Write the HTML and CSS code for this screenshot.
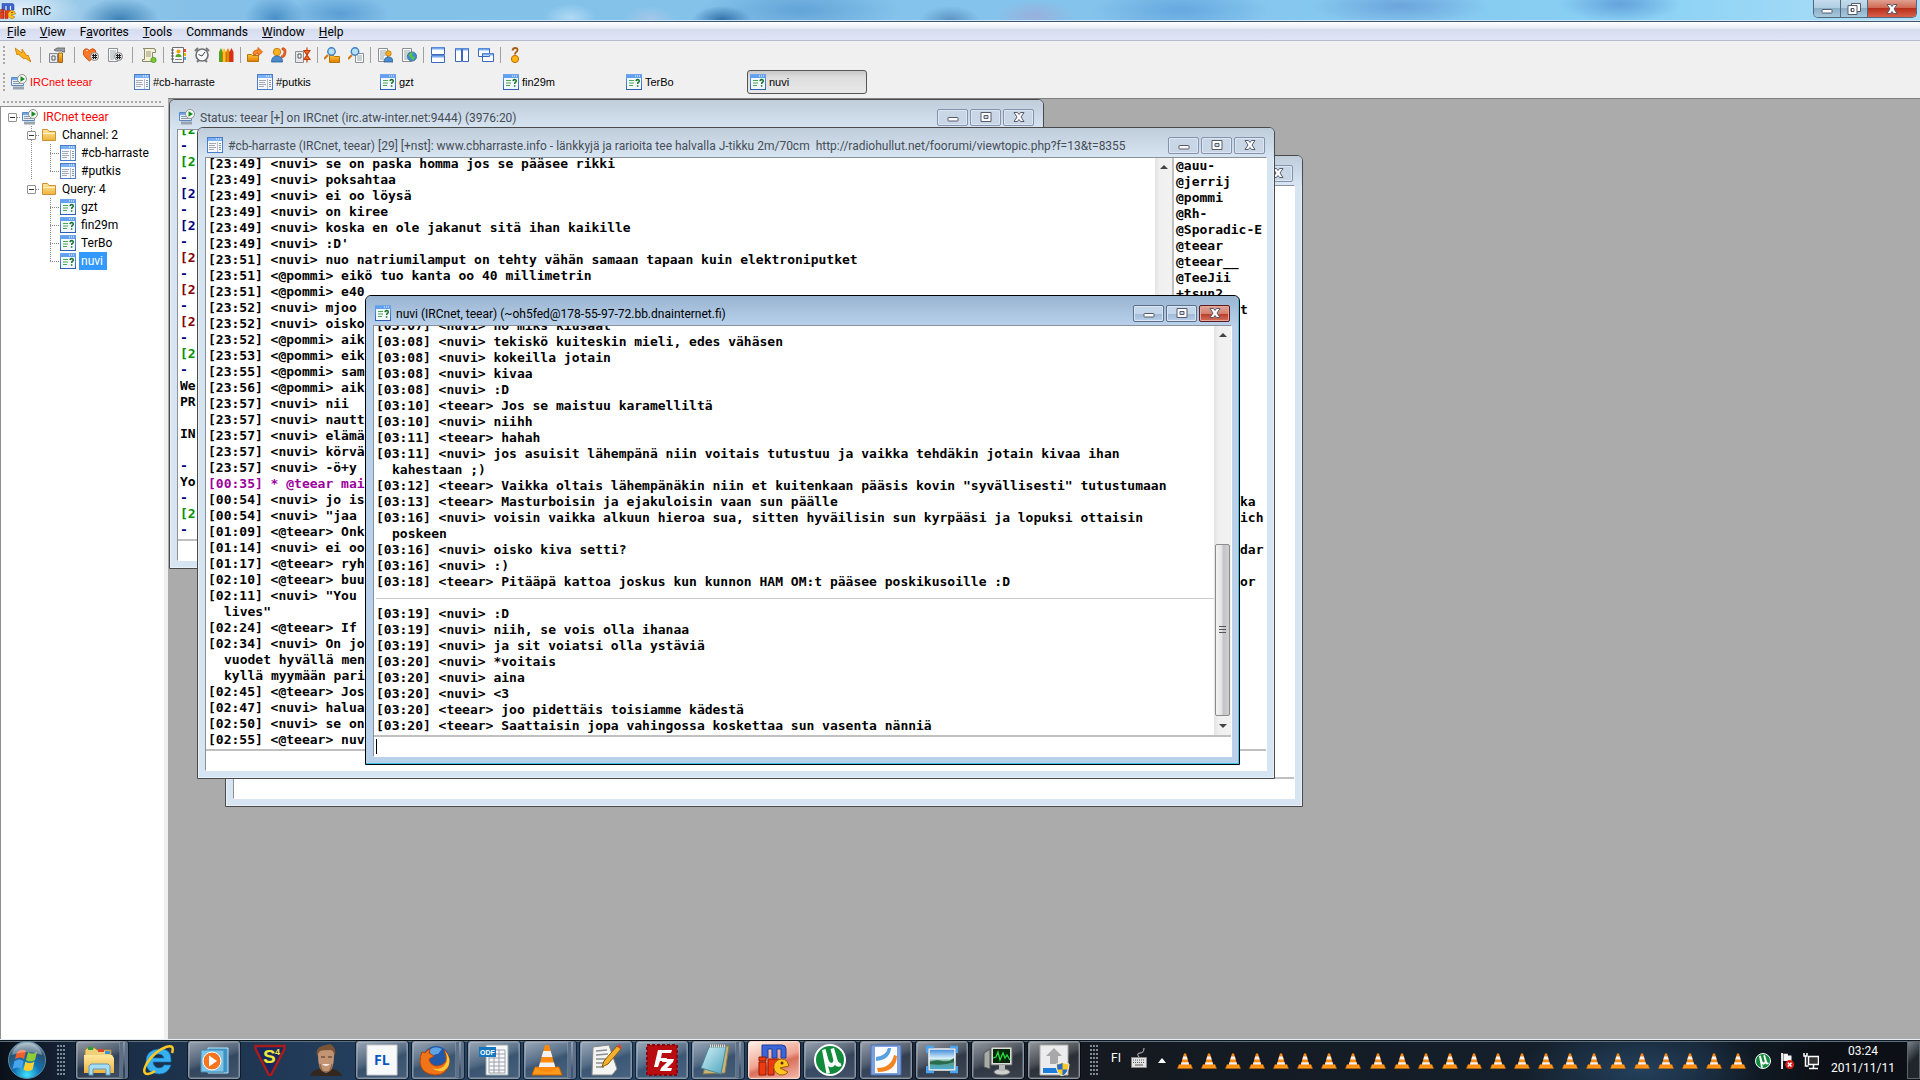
FILE: index.html
```html
<!DOCTYPE html>
<html lang="fi">
<head>
<meta charset="utf-8">
<title>mIRC</title>
<link rel="stylesheet" href="styles.css">
</head>
<body>
<svg class="sprites" aria-hidden="true">
  <defs>
    <linearGradient id="gBlue" x1="0" y1="0" x2="0" y2="1"><stop offset="0" stop-color="#6fa4ec"/><stop offset="1" stop-color="#2c5fb4"/></linearGradient>
    <linearGradient id="gFolder" x1="0" y1="0" x2="0" y2="1"><stop offset="0" stop-color="#ffe9a0"/><stop offset="1" stop-color="#eeb23c"/></linearGradient>
    <linearGradient id="gOrange" x1="0" y1="0" x2="0" y2="1"><stop offset="0" stop-color="#ffc83c"/><stop offset="1" stop-color="#e07800"/></linearGradient>
    <radialGradient id="gOrb" cx=".5" cy=".9" r=".9"><stop offset="0" stop-color="#3fe4ff"/><stop offset=".4" stop-color="#1272b4"/><stop offset=".75" stop-color="#28506e"/><stop offset="1" stop-color="#a8bcc8"/></radialGradient>
    <linearGradient id="gSky" x1="0" y1="0" x2="0" y2="1"><stop offset="0" stop-color="#3a86d8"/><stop offset=".45" stop-color="#d8f0fa"/><stop offset=".6" stop-color="#5a9a80"/><stop offset="1" stop-color="#4cb0d8"/></linearGradient>
    <linearGradient id="gNote" x1="0" y1="0" x2="1" y2="1"><stop offset="0" stop-color="#d6f2f8"/><stop offset="1" stop-color="#4aa2bc"/></linearGradient>
  </defs>
  <symbol id="chan" viewBox="0 0 16 16"><rect x=".5" y=".5" width="15" height="15" fill="#f6f9fd" stroke="#4a7cc8"/><path d="M1 1h14v3H1z" fill="#7ab0f4"/><path d="M9 2h1M11 2h1M13 2h1" stroke="#fff"/><path d="M2 6.500h7M2 8.500h6M2 10.500h7M2 12.500h5" stroke="#a4a8b0"/><path d="M10.500 5v10" stroke="#b8bcc4"/><path d="M12 6.500h2M12 8.500h2M12 10.500h2M12 12.500h2" stroke="#8c929c"/></symbol>
  <symbol id="query" viewBox="0 0 16 16"><rect x=".5" y=".5" width="15" height="15" fill="#f2f8fc" stroke="url(#gBlue)"/><path d="M1 1h14v3H1z" fill="#62a0f0"/><path d="M9 2h1M11 2h1M13 2h1" stroke="#fff"/><path d="M3 6.500h5M3 9h5M3 11.500h4" stroke="#4aa850"/><path d="M10 7.200q.2-1.700 1.800-1.700 1.500.2 1.500 1.500 0 .9-1 1.400-.6.4-.6 1.600M11.600 11.200v1.600" fill="none" stroke="#167028" stroke-width="1.500"/></symbol>
  <symbol id="server" viewBox="0 0 16 16"><path d="M.500 3.500h12v8h-12z" fill="#e8eff8" stroke="#5c86c0"/><path d="M1 4h11v2H1z" fill="#74a6ea"/><path d="M2 7.500h7M2 9.500h8" stroke="#8c98a8"/><path d="M2 14h11" stroke="#9aa4b0" stroke-width="3"/><circle cx="11" cy="5" r="4.500" fill="#f4f8f4" stroke="#8a948c"/><path d="M9.500 2.200v5.600l4.500-2.800z" fill="#178a20"/></symbol>
  <symbol id="folder" viewBox="0 0 16 16"><path d="M1.500 13.500v-11h5l1.500 2h6.500v9z" fill="url(#gFolder)" stroke="#d09030"/><path d="M2 6.500h12" stroke="#fff4c8"/></symbol>
  <symbol id="mirc" viewBox="0 0 32 32"><path d="M4 14V1h20q4 0 4 4v9h-5V5h-4v9h-5V5h-4v9z" fill="#3c66d8" stroke="#1a3a98"/><path d="M1 13h7v4H1zM1 18h7v13H1zM10 15h11v6h-5v10h-6z" fill="#ee3a10" stroke="#8c1a04"/><path d="M29 17a8 8 0 1 0 1 11l-8-4 9-2z" fill="#ffc420" stroke="#9a5c00"/><circle cx="24" cy="19" r="1.500" fill="#5c2c00"/></symbol>
  <symbol id="bolt" viewBox="0 0 16 16"><path d="M0 1l7 5 0-4 5 7 1-1 3 7-6-4-1 1-6-5-1 1z" fill="#ffb31e" stroke="#c67800" stroke-width=".8"/></symbol>
  <symbol id="opts" viewBox="0 0 16 16"><path d="M.5 6.500h8v9h-8z" fill="#e6e8ec" stroke="#83878f"/><path d="M3 9h3v4H3z" fill="#fff" stroke="#555"/><path d="M5 3q3-3 6-2h5v4h-2l-1-1h-6z" fill="#9a9ea4" stroke="#555b62" stroke-width=".8"/><path d="M9.500 6h4v9.500h-4z" fill="url(#gOrange)" stroke="#8a5200" stroke-width=".8"/></symbol>
  <symbol id="heart" viewBox="0 0 16 16"><path d="M6.500 14Q-1.500 8 .6 3.500 3 .2 6.500 3.500 10 .2 12.500 3.500 14 8 6.500 14z" fill="#ff7626" stroke="#cc4a08"/><path d="M3 4q1-1 2-.500" stroke="#ffd0a0" fill="none"/><circle cx="11.500" cy="9.500" r="4" fill="#dcdfe2" stroke="#888"/><path d="M10.500 7v5M12.500 7v5M9 8.500h5M9 10.500h5" stroke="#222"/></symbol>
  <symbol id="listc" viewBox="0 0 16 16"><path d="M1.500 1.500h9v13h-9z" fill="#fafafa" stroke="#8c9096"/><path d="M3 4h6M3 6h6M3 8h4M3 10h4M3 12h4" stroke="#9aa"/><circle cx="11.500" cy="9.500" r="4" fill="#d8dbde" stroke="#888"/><path d="M10.500 7v5M12.500 7v5M9 8.500h5M9 10.500h5" stroke="#222"/></symbol>
  <symbol id="scroll" viewBox="0 0 16 16"><path d="M3.500 2.500v10H1.500v2h10v-9h3v-3h-1v-1H2z" fill="#f4f0da" stroke="#8e8a68"/><path d="M5 5h5M5 7h5M5 9h5" stroke="#a09a78"/><circle cx="12.500" cy="13" r="2.700" fill="#78c830" stroke="#468a14" stroke-width=".6"/></symbol>
  <symbol id="abook" viewBox="0 0 16 16"><path d="M2.500.5h11v15h-11z" fill="#f6f6f6" stroke="#6a6e74"/><path d="M1 3h3M1 6h3M1 9h3M1 12h3" stroke="#555"/><path d="M14 2h2v3h-2z" fill="#ee4828"/><path d="M14 6h2v3h-2z" fill="#f2b400"/><path d="M14 10h2v3h-2z" fill="#5aa8e8"/><circle cx="8.500" cy="4.500" r="2" fill="#f0a000"/><path d="M5.500 10q0-3 3-3t3 3z" fill="#55a828"/><path d="M5 12.500h7" stroke="#888"/></symbol>
  <symbol id="clock" viewBox="0 0 16 16"><path d="M1 4l3-3M15 4l-3-3M3 15l2-2M13 15l-2-2" stroke="#74787c" stroke-width="2"/><circle cx="8" cy="8" r="6" fill="#fafafa" stroke="#6c7074" stroke-width="1.600"/><path d="M8 9l3-4M8 9L4.500 7.500" stroke="#444"/></symbol>
  <symbol id="pens" viewBox="0 0 16 16"><path d="M1 15V5l2-4 2 4v10z" fill="#55a020"/><path d="M4 15V5l2-4 2 4v10z" fill="#ffc020"/><path d="M8 15V5l2-4 2 4v10z" fill="#f08010"/><path d="M11.500 15V5l2-4 2 4v10z" fill="#d83010"/><path d="M4.500 5v10M8 5v10M11.500 5v10" stroke="#8a5000" stroke-width=".6"/></symbol>
  <symbol id="send" viewBox="0 0 16 16"><path d="M.5 7.500h4l1 1h6v6H.5z" fill="url(#gOrange)" stroke="#b87400"/><path d="M6 7q0-4 5-4V.5L15.500 5 11 9V6q-2 0-2.500 2z" fill="#ff8a20" stroke="#c84c08" stroke-width=".8"/></symbol>
  <symbol id="chat" viewBox="0 0 16 16"><circle cx="6" cy="5" r="3.700" fill="#ffb020" stroke="#b87000" stroke-width=".8"/><path d="M.5 15q0-6 5.500-6t5.500 6z" fill="#4a8ccc" stroke="#2a5a94" stroke-width=".8"/><path d="M11 1q4-1 4 4t-4 6l-1-2q3-1 3-4t-2-2z" fill="#f06420" stroke="#b83a08" stroke-width=".6"/></symbol>
  <symbol id="dcc" viewBox="0 0 16 16"><path d="M.5 4.500h8v11h-8z" fill="#e6e8ec" stroke="#8a8e95"/><path d="M3 7h3v4H3z" fill="#fff" stroke="#555"/><path d="M12 .5v3h3L12 8 9 3.500h3zM12 15.500v-3h3L12 8l-3 4.500h3z" fill="#f47020" stroke="#c83808" stroke-width="1.200"/></symbol>
  <symbol id="searchf" viewBox="0 0 16 16"><path d="M5.500 8.500h4l1 1h5v6h-10z" fill="url(#gOrange)" stroke="#b87400"/><path d="M4 8l-4 4" stroke="#d07818" stroke-width="2.200"/><circle cx="7.500" cy="4.500" r="3.700" fill="#b8e0f8" stroke="#3c80c0" stroke-width="1.400"/></symbol>
  <symbol id="searchl" viewBox="0 0 16 16"><path d="M7.500 6.500h8v9h-8z" fill="#fafafa" stroke="#8c9096"/><path d="M9 9h5M9 11h5M9 13h5" stroke="#9aa"/><path d="M4 8l-4 4" stroke="#d07818" stroke-width="2.200"/><circle cx="7" cy="4.500" r="3.700" fill="#b8e0f8" stroke="#3c80c0" stroke-width="1.400"/></symbol>
  <symbol id="notify" viewBox="0 0 16 16"><path d="M1.500 1.500h9v13h-9z" fill="#fafafa" stroke="#8c9096"/><path d="M3 4h6M3 6h6M3 8h6M3 10h4M3 12h4" stroke="#9aa"/><circle cx="11.500" cy="6.500" r="2.700" fill="#ffb020" stroke="#b87000" stroke-width=".8"/><path d="M7 15q0-5 4.500-5t4.500 5z" fill="#4a8ccc" stroke="#2a5a94" stroke-width=".8"/></symbol>
  <symbol id="urls" viewBox="0 0 16 16"><path d="M1.500 1.500h9v13h-9z" fill="#fafafa" stroke="#8c9096"/><path d="M3 4h6M3 6h6M3 8h4M3 10h3M3 12h4" stroke="#9aa"/><circle cx="11" cy="9.500" r="4.600" fill="#3c8cd4" stroke="#245a94" stroke-width=".7"/><path d="M7.500 8q3-4 4.500-2l-1 3 3 1-2 4-2-3z" fill="#5cc040"/></symbol>
  <symbol id="tileh" viewBox="0 0 16 16"><path d="M1.500.5h13v7h-13zM1.500 8.500h13v7h-13z" fill="#fff" stroke="#3a68bc"/><path d="M2 1.500h12M2 9.500h12" stroke="#78aaf0" stroke-width="2"/></symbol>
  <symbol id="tilev" viewBox="0 0 16 16"><path d="M1.500 1.500h6v13h-6zM8.500 1.500h6v13h-6z" fill="#fff" stroke="#3a68bc"/><path d="M2 2.500h5M9 2.500h5" stroke="#78aaf0" stroke-width="2"/></symbol>
  <symbol id="cascade" viewBox="0 0 16 16"><path d="M.5 1.500h11v8H.5zM4.500 6.500h11v8h-11z" fill="#fff" stroke="#3a68bc"/><path d="M1 2.500h10M5 7.500h10" stroke="#78aaf0" stroke-width="2"/></symbol>
  <symbol id="about" viewBox="0 0 16 16"><path d="M5.500 3.500Q6 1 8.300 1t2.200 2Q10.500 4.500 9 5.200 8 5.800 8 7.500" fill="none" stroke="#a85c10" stroke-width="1.800"/><circle cx="8" cy="12" r="3.600" fill="#ffb414" stroke="#b87000"/></symbol>
  <symbol id="wmin" viewBox="0 0 12 10"><rect x="1" y="5.500" width="10" height="3.500" rx=".5" fill="#fff" stroke="#555a6c"/></symbol>
  <symbol id="wmax" viewBox="0 0 12 10"><path fill-rule="evenodd" d="M1 .5h10v9H1zM4 3.500v3h4v-3z" fill="#fff" stroke="#555a6c"/></symbol>
  <symbol id="wrest" viewBox="0 0 14 12"><path d="M4.500.5h9v8h-9z" fill="#fff" stroke="#555a6c"/><path fill-rule="evenodd" d="M1 2.500h9v9H1zM4 5.500v3h3v-3z" fill="#fff" stroke="#555a6c"/></symbol>
  <symbol id="wx" viewBox="0 0 12 10"><path d="M1 .5h3.500L6 2.500 7.500.5H11L8 5l3 4.500H7.500L6 7.500 4.500 9.500H1L4 5z" fill="#fff" stroke="#555a6c"/></symbol>
  <symbol id="vlc" viewBox="0 0 16 16"><path d="M2 11.500h12l1.500 4H.5z" fill="#ff9a1c" stroke="#c86400" stroke-width=".5"/><path d="M7 .5h2L12.500 13q-4.500 2-9 0z" fill="#ff8a10"/><path d="M6.200 3.500h3.600l.9 3H5.300zM4.500 9.300h7l.6 2.200H3.900z" fill="#f2f2f4"/></symbol>
  <symbol id="utor" viewBox="0 0 32 32"><circle cx="16" cy="16" r="15" fill="#128a3c" stroke="#fff" stroke-width="2"/><path d="M8 6l3.500-1 3 11q1.500 4 4 2.500 1.500-1 .5-4L16.500 5l3.500-1 3.500 12q1 3.500 3 3l1 3q-4 2-6.500-1-3 4-7 1l2 7-3.500 1z" fill="#fff"/></symbol>
  <symbol id="orb" viewBox="0 0 40 40"><circle cx="20" cy="20" r="18.500" fill="url(#gOrb)" stroke="#5a8aa4"/><path d="M10 12q5-4 9-1l-2 8q-4-3-9 0z" fill="#f0602c"/><path d="M21 12q4 3 9 0l-2 8q-5 3-9 0z" fill="#90cc38"/><path d="M7.500 21q5-3 9 0l-2 8q-4-3-9 0z" fill="#48a4ec"/><path d="M18.500 21.500q4 3 9 0l-2 8q-5 3-9 0z" fill="#ffce30"/><path d="M5 15Q8 3 20 3t15 12Q20 9 5 15z" fill="#fff" opacity=".35"/></symbol>
  <symbol id="explorer" viewBox="0 0 32 32"><path d="M2 28V6l2-2h8l2 2h14v22z" fill="#f0d078" stroke="#a88430"/><path d="M5 3h5v3H5z" fill="#2ca040"/><path d="M15 5h6v3h-6z" fill="#d84830"/><path d="M22 7h5v3h-5z" fill="#3c90dc"/><path d="M1 11h28l2 3v15H1z" fill="url(#gFolder)"/><path d="M6 31V22l2-2h17l2 2v9h-4v-6H10v6z" fill="#a8dcf4" stroke="#5a9cc4"/></symbol>
  <symbol id="ie" viewBox="0 0 32 32"><path fill-rule="evenodd" d="M29 18H11q1 6 6 6 4 0 5-3h7q-3 9-12 9Q4 29 4 17.500T17 5t12 13zM11 14h11q-1-4-5.500-4T11 14z" fill="#38b0f0" stroke="#1470b8" stroke-width=".7"/><path d="M30 9q3-9-6-6Q13 7 5 19-1 30 6 30q3 0 7-3" fill="none" stroke="#fcc824" stroke-width="2.500"/></symbol>
  <symbol id="wmp" viewBox="0 0 32 32"><path d="M10 4h20v25H10z" fill="#3c96c8" stroke="#bde6fa"/><path d="M3 6h23v22H3z" fill="#7cc4e8" stroke="#4488b0"/><circle cx="14" cy="17" r="9" fill="#f47420" stroke="#fff"/><path d="M11 11.500v11l8-5.500z" fill="#fff"/></symbol>
  <symbol id="face" viewBox="0 0 32 32"><path d="M0 32q2-6 9-7h13q8 1 10 7z" fill="#33271f"/><path d="M8 10q0-8 8-8t8 8q0 12-3 16-5 5-10 0-3-4-3-16z" fill="#c39474"/><path d="M7 13Q5 4 12 2l8-2q7 3 5 13-1-6-4-7-8 0-11 1-2 2-3 6z" fill="#7a5436"/><path d="M11 13h4M18 13h4" stroke="#4a3022" stroke-width="1.200"/><path d="M12 20q4 4 8 0z" fill="#f4ece4"/><path d="M10 20q1 8 6 8t6-8" fill="none" stroke="#94694a" stroke-width="1.500"/></symbol>
  <symbol id="ff" viewBox="0 0 32 32"><circle cx="17" cy="15" r="13" fill="#2258a8"/><path d="M10 6q6-5 13-1l-4 5q-5 0-6 4z" fill="#5ca4e4"/><path d="M3 8l3 1q2-3 5-4l-1 4 5 3-5 3q1 6 7 7 7 0 10-5 1-5-2-11 6 5 5 13-2 12-14 12Q2 30 1 18 1 12 3 8z" fill="#f07418" stroke="#b84408"/><path d="M26 7q4 8 0 14-5 6-13 3 9 7 16-1 4-8-3-16z" fill="#ffc838"/></symbol>
  <symbol id="writer" viewBox="0 0 32 32"><path d="M3 3l16-2 8 24-5 6H2z" fill="#f4f4f2" stroke="#888"/><path d="M6 7l11-1M6 11l12-1M6 15h11M6 19h9M6 23h8" stroke="#8a8e92" stroke-width="1.500"/><path d="M12 23l2-6L27 2l4 3-13 15z" fill="#f4b030" stroke="#8c5800"/><path d="M27 2l4 3 1-2-3-3z" fill="#d44838"/></symbol>
  <symbol id="fz" viewBox="0 0 32 32"><path d="M1 1h30v30H1z" fill="#b80c10" stroke="#8c0408" stroke-width="2" stroke-dasharray="3 2"/><path d="M8 23L12 6h14l-1 3h-9l-1 5h6l-1 3h-6l-2 6zM17 15h11l-1 3-6 6h5l-1 3H14l1-3 6-6h-5z" fill="#fff"/></symbol>
  <symbol id="note" viewBox="0 0 32 32"><path d="M12 2h18l-4 27-22 1z" fill="#c8b478" stroke="#8a7848"/><path d="M10 3h17l-5 27L2 24z" fill="url(#gNote)" stroke="#4a8898"/><path d="M11 2h16" stroke="#ddd" stroke-width="3" stroke-dasharray="1 1"/></symbol>
  <symbol id="pdf" viewBox="0 0 32 32"><path d="M1 1h30v30H1z" fill="#7ea0dc" stroke="#4a70b4"/><path d="M5 3h22v26H5z" fill="#fafcff"/><path d="M6 13q10-1 12-9h3q-1 12-15 13z" fill="#58a0e0"/><path d="M7 24q14 0 17-13l3 1Q26 28 8 28z" fill="#f48420"/></symbol>
  <symbol id="photo" viewBox="0 0 32 32"><path d="M3 5h26v21H3z" fill="url(#gSky)" stroke="#f4f4f4" stroke-width="1.500"/><path d="M4 18q6-3 12-1t12-3v4q-10 4-24 2z" fill="#2c6a50"/><path d="M1 9V3h7M24 3h7v6M31 22v6h-7M8 28H1v-6" fill="none" stroke="#48a4f0" stroke-width="2.500"/></symbol>
  <symbol id="taskm" viewBox="0 0 32 32"><path d="M2 9l6-4v20l-6-2z" fill="#a8aca8" stroke="#555"/><path d="M9 3h21v18H9z" fill="#dcdedc" stroke="#666"/><path d="M11 5h17v14H11z" fill="#06280a"/><path d="M11 14l3-1 2-5 2 8 3-7 2 5 2-3 3 5" fill="none" stroke="#28dc3c" stroke-width="1.300"/><ellipse cx="20" cy="28" rx="8" ry="3" fill="#cfd1cf" stroke="#777"/><path d="M17 21h6v6h-6z" fill="#b8bab8"/></symbol>
  <symbol id="inst" viewBox="0 0 32 32"><path d="M2 1h28v30H2z" fill="#ececee" stroke="#aaa"/><path d="M16 4l8 8h-4v8h-8v-8H8z" fill="#a8a8aa"/><path d="M5 24h16v5H5z" fill="#1c7cdc"/><path d="M18 20q4 0 6-2 3 2 7 2 0 9-7 12-6-3-6-12z" fill="#f8c824" stroke="#eee"/><path d="M19 20.500q3 0 5.500-1.500v6.500h-5zM24.500 25.500h5q-1 4-5 6z" fill="#2468c8"/></symbol>
  <symbol id="kbd" viewBox="0 0 16 22"><path d="M8 10q-3-4 1-4t4-5" fill="none" stroke="#ccc"/><path d="M.5 10.500h15v10H.5z" fill="#e4e4e4" stroke="#888"/><path d="M2 13h12M2 15.500h12" stroke="#555" stroke-dasharray="1 1"/><path d="M4 18h8" stroke="#555"/></symbol>
  <symbol id="flag" viewBox="0 0 16 20"><path d="M2.500 1v18" stroke="#fff" stroke-width="2"/><path d="M4 2h5v2h4v8H9l-1-2H4z" fill="#f4f4f4"/><circle cx="11" cy="14" r="5" fill="#d82018"/><path d="M9 12l4 4M13 12l-4 4" stroke="#fff" stroke-width="1.600"/></symbol>
  <symbol id="net" viewBox="0 0 16 18"><path d="M5.500 4.500h10v8h-10z" fill="#333" stroke="#fff" stroke-width="1.500"/><path d="M10.500 13v3M6 16.500h9M2.500 6v8h3M1 1v3h3V1M2.500 4v3" fill="none" stroke="#fff" stroke-width="1.500"/></symbol>
</svg>

<div class="desktop">
  <header class="titlebar">
    <svg class="i16"><use href="#mirc"/></svg>
    <h1>mIRC</h1>
    <div class="appbtns">
      <button aria-label="Minimize"><svg width="12" height="10"><use href="#wmin"/></svg></button>
      <button aria-label="Restore"><svg width="14" height="12"><use href="#wrest"/></svg></button>
      <button class="close" aria-label="Close"><svg width="12" height="10"><use href="#wx"/></svg></button>
    </div>
  </header>

  <nav class="menubar">
    <button><u>F</u>ile</button><button><u>V</u>iew</button><button>F<u>a</u>vorites</button><button><u>T</u>ools</button><button>Commands</button><button><u>W</u>indow</button><button><u>H</u>elp</button>
  </nav>

  <div class="toolbar">
    <span class="grip"></span>
    <button aria-label="Connect"><svg class="i16"><use href="#bolt"/></svg></button><i class="sep wide"></i>
    <button aria-label="Options"><svg class="i16"><use href="#opts"/></svg></button><i class="sep wide"></i>
    <button aria-label="Favorites"><svg class="i16"><use href="#heart"/></svg></button>
    <button aria-label="Channels list"><svg class="i16"><use href="#listc"/></svg></button><i class="sep wide"></i>
    <button aria-label="Scripts editor"><svg class="i16"><use href="#scroll"/></svg></button><i class="sep"></i>
    <button aria-label="Address book"><svg class="i16"><use href="#abook"/></svg></button>
    <button aria-label="Timer"><svg class="i16"><use href="#clock"/></svg></button>
    <button aria-label="Colors"><svg class="i16"><use href="#pens"/></svg></button><i class="sep"></i>
    <button aria-label="Send file"><svg class="i16"><use href="#send"/></svg></button>
    <button aria-label="Chat"><svg class="i16"><use href="#chat"/></svg></button>
    <button aria-label="DCC options"><svg class="i16"><use href="#dcc"/></svg></button><i class="sep"></i>
    <button aria-label="Received files"><svg class="i16"><use href="#searchf"/></svg></button>
    <button aria-label="Log files"><svg class="i16"><use href="#searchl"/></svg></button><i class="sep"></i>
    <button aria-label="Notify list"><svg class="i16"><use href="#notify"/></svg></button>
    <button aria-label="URL list"><svg class="i16"><use href="#urls"/></svg></button><i class="sep"></i>
    <button aria-label="Tile horizontally"><svg class="i16"><use href="#tileh"/></svg></button>
    <button aria-label="Tile vertically"><svg class="i16"><use href="#tilev"/></svg></button>
    <button aria-label="Cascade"><svg class="i16"><use href="#cascade"/></svg></button><i class="sep"></i>
    <button aria-label="About"><svg class="i16"><use href="#about"/></svg></button>
  </div>

  <div class="switchbar">
    <span class="grip"></span>
    <button class="alert"><svg class="i16"><use href="#server"/></svg>IRCnet teear</button>
    <button><svg class="i16"><use href="#chan"/></svg>#cb-harraste</button>
    <button><svg class="i16"><use href="#chan"/></svg>#putkis</button>
    <button><svg class="i16"><use href="#query"/></svg>gzt</button>
    <button><svg class="i16"><use href="#query"/></svg>fin29m</button>
    <button><svg class="i16"><use href="#query"/></svg>TerBo</button>
    <button class="on"><svg class="i16"><use href="#query"/></svg>nuvi</button>
  </div>

  <div class="work">
    <aside class="side">
      <div class="hgrip"></div>
      <ul class="tree">
        <li><div class="row alert"><b class="box"></b><i class="dash"></i><svg class="i16"><use href="#server"/></svg><span>IRCnet teear</span></div>
          <ul class="lv2">
            <li><div class="row"><b class="box"></b><i class="dash"></i><svg class="i16"><use href="#folder"/></svg><span>Channel: 2</span></div>
              <ul class="lv3">
                <li class="row"><i class="dash"></i><svg class="i16"><use href="#chan"/></svg><span>#cb-harraste</span></li>
                <li class="row"><i class="dash"></i><svg class="i16"><use href="#chan"/></svg><span>#putkis</span></li>
              </ul></li>
            <li><div class="row"><b class="box"></b><i class="dash"></i><svg class="i16"><use href="#folder"/></svg><span>Query: 4</span></div>
              <ul class="lv3">
                <li class="row"><i class="dash"></i><svg class="i16"><use href="#query"/></svg><span>gzt</span></li>
                <li class="row"><i class="dash"></i><svg class="i16"><use href="#query"/></svg><span>fin29m</span></li>
                <li class="row"><i class="dash"></i><svg class="i16"><use href="#query"/></svg><span>TerBo</span></li>
                <li class="row"><i class="dash"></i><svg class="i16"><use href="#query"/></svg><span class="sel">nuvi</span></li>
              </ul></li>
          </ul></li>
      </ul>
    </aside>

    <main class="mdi">
      <section class="win w-status">
        <div class="cap"><svg class="i16"><use href="#server"/></svg><h2>Status: teear [+] on IRCnet (irc.atw-inter.net:9444) (3976:20)</h2>
          <div class="btns"><button aria-label="Minimize"><svg width="12" height="10"><use href="#wmin"/></svg></button><button aria-label="Maximize"><svg width="12" height="10"><use href="#wmax"/></svg></button><button aria-label="Close"><svg width="12" height="10"><use href="#wx"/></svg></button></div></div>
        <div class="body"><div class="pane"><div class="log">
          <p class="green">[2</p><p class="navy">-</p><p class="green">[2</p><p class="navy">-</p><p class="navy">[2</p><p class="navy">-</p><p class="navy">[2</p><p class="navy">-</p><p class="maroon">[2</p><p class="navy">-</p><p class="maroon">[2</p><p class="navy">-</p><p class="maroon">[2</p><p class="navy">-</p><p class="green">[2</p><p class="navy">-</p><p>We</p><p>PR</p><p></p><p>IN</p><p></p><p class="navy">-</p><p>Yo</p><p class="navy">-</p><p class="green">[2</p><p class="navy">-</p>
        </div></div>
        <div class="edit"><input type="text" aria-label="Status input"></div></div>
      </section>

      <section class="win w-putkis">
        <div class="cap"><div class="btns"><button aria-label="Minimize"><svg width="12" height="10"><use href="#wmin"/></svg></button><button aria-label="Maximize"><svg width="12" height="10"><use href="#wmax"/></svg></button><button aria-label="Close"><svg width="12" height="10"><use href="#wx"/></svg></button></div></div>
        <div class="body"><div class="pane"></div><div class="edit"><input type="text" aria-label="#putkis input"></div></div>
      </section>

      <section class="win w-cb">
        <div class="cap"><svg class="i16"><use href="#chan"/></svg><h2>#cb-harraste (IRCnet, teear) [29] [+nst]: www.cbharraste.info - länkkyjä ja rarioita tee halvalla J-tikku 2m/70cm&nbsp; http://radiohullut.net/foorumi/viewtopic.php?f=13&amp;t=8355</h2>
          <div class="btns"><button aria-label="Minimize"><svg width="12" height="10"><use href="#wmin"/></svg></button><button aria-label="Maximize"><svg width="12" height="10"><use href="#wmax"/></svg></button><button aria-label="Close"><svg width="12" height="10"><use href="#wx"/></svg></button></div></div>
        <div class="body"><div class="pane"><div class="log">
          <p>[23:49] &lt;nuvi&gt; se on paska homma jos se pääsee rikki</p>
          <p>[23:49] &lt;nuvi&gt; poksahtaa</p>
          <p>[23:49] &lt;nuvi&gt; ei oo löysä</p>
          <p>[23:49] &lt;nuvi&gt; on kiree</p>
          <p>[23:49] &lt;nuvi&gt; koska en ole jakanut sitä ihan kaikille</p>
          <p>[23:49] &lt;nuvi&gt; :D'</p>
          <p>[23:51] &lt;nuvi&gt; nuo natriumilamput on tehty vähän samaan tapaan kuin elektroniputket</p>
          <p>[23:51] &lt;@pommi&gt; eikö tuo kanta oo 40 millimetrin</p>
          <p>[23:51] &lt;@pommi&gt; e40</p>
          <p>[23:52] &lt;nuvi&gt; mjoo</p>
          <p>[23:52] &lt;nuvi&gt; oisko</p>
          <p>[23:52] &lt;@pommi&gt; aik</p>
          <p>[23:53] &lt;@pommi&gt; eik</p>
          <p>[23:55] &lt;@pommi&gt; sam</p>
          <p>[23:56] &lt;@pommi&gt; aik</p>
          <p>[23:57] &lt;nuvi&gt; nii</p>
          <p>[23:57] &lt;nuvi&gt; nautt</p>
          <p>[23:57] &lt;nuvi&gt; elämä</p>
          <p>[23:57] &lt;nuvi&gt; körvä</p>
          <p>[23:57] &lt;nuvi&gt; -ö+y</p>
          <p class="purple">[00:35] * @teear mai</p>
          <p>[00:54] &lt;nuvi&gt; jo is</p>
          <p>[00:54] &lt;nuvi&gt; "jaa</p>
          <p>[01:09] &lt;@teear&gt; Onk</p>
          <p>[01:14] &lt;nuvi&gt; ei oo</p>
          <p>[01:17] &lt;@teear&gt; ryh</p>
          <p>[02:10] &lt;@teear&gt; buu</p>
          <p>[02:11] &lt;nuvi&gt; "You<br>lives"</p>
          <p>[02:24] &lt;@teear&gt; If</p>
          <p>[02:34] &lt;nuvi&gt; On jo<br>vuodet hyvällä men<br>kyllä myymään pari</p>
          <p>[02:45] &lt;@teear&gt; Jos</p>
          <p>[02:47] &lt;nuvi&gt; halua</p>
          <p>[02:50] &lt;nuvi&gt; se on</p>
          <p>[02:55] &lt;@teear&gt; nuv</p>
        </div><div class="scroll"><span class="up"></span></div>
        <ul class="nicks">
          <li>@auu-</li><li>@jerrij</li><li>@pommi</li><li>@Rh-</li><li>@Sporadic-E</li><li>@teear</li><li>@teear__</li><li>@TeeJii</li><li>+tsun2</li><li class="tail">t</li>
          <li></li><li></li><li></li><li></li><li></li><li></li><li></li><li></li><li></li><li></li><li></li>
          <li class="tail">ka</li><li class="tail">ich</li><li></li><li class="tail">dar</li><li></li><li class="tail">or</li>
        </ul></div>
        <div class="edit"><input type="text" aria-label="#cb-harraste input"></div></div>
      </section>

      <section class="win w-nuvi active">
        <div class="cap"><svg class="i16"><use href="#query"/></svg><h2>nuvi (IRCnet, teear) (~oh5fed@178-55-97-72.bb.dnainternet.fi)</h2>
          <div class="btns"><button aria-label="Minimize"><svg width="12" height="10"><use href="#wmin"/></svg></button><button aria-label="Maximize"><svg width="12" height="10"><use href="#wmax"/></svg></button><button class="close" aria-label="Close"><svg width="12" height="10"><use href="#wx"/></svg></button></div></div>
        <div class="body"><div class="pane"><div class="log">
          <p>[03:07] &lt;nuvi&gt; no miks kiusaat</p>
          <p>[03:08] &lt;nuvi&gt; tekiskö kuiteskin mieli, edes vähäsen</p>
          <p>[03:08] &lt;nuvi&gt; kokeilla jotain</p>
          <p>[03:08] &lt;nuvi&gt; kivaa</p>
          <p>[03:08] &lt;nuvi&gt; :D</p>
          <p>[03:10] &lt;teear&gt; Jos se maistuu karamelliltä</p>
          <p>[03:10] &lt;nuvi&gt; niihh</p>
          <p>[03:11] &lt;teear&gt; hahah</p>
          <p>[03:11] &lt;nuvi&gt; jos asuisit lähempänä niin voitais tutustuu ja vaikka tehdäkin jotain kivaa ihan<br>kahestaan ;)</p>
          <p>[03:12] &lt;teear&gt; Vaikka oltais lähempänäkin niin et kuitenkaan pääsis kovin "syvällisesti" tutustumaan</p>
          <p>[03:13] &lt;teear&gt; Masturboisin ja ejakuloisin vaan sun päälle</p>
          <p>[03:16] &lt;nuvi&gt; voisin vaikka alkuun hieroa sua, sitten hyväilisin sun kyrpääsi ja lopuksi ottaisin<br>poskeen</p>
          <p>[03:16] &lt;nuvi&gt; oisko kiva setti?</p>
          <p>[03:16] &lt;nuvi&gt; :)</p>
          <p>[03:18] &lt;teear&gt; Pitääpä kattoa joskus kun kunnon HAM OM:t pääsee poskikusoille :D</p>
          <hr>
          <p>[03:19] &lt;nuvi&gt; :D</p>
          <p>[03:19] &lt;nuvi&gt; niih, se vois olla ihanaa</p>
          <p>[03:19] &lt;nuvi&gt; ja sit voiatsi olla ystäviä</p>
          <p>[03:20] &lt;nuvi&gt; *voitais</p>
          <p>[03:20] &lt;nuvi&gt; aina</p>
          <p>[03:20] &lt;nuvi&gt; &lt;3</p>
          <p>[03:20] &lt;teear&gt; joo pidettäis toisiamme kädestä</p>
          <p>[03:20] &lt;teear&gt; Saattaisin jopa vahingossa koskettaa sun vasenta nänniä</p>
        </div><div class="scroll"><span class="up"></span><span class="thumb"></span><span class="down"></span></div></div>
        <div class="edit"><span class="caret"></span><input type="text" aria-label="Message to nuvi"></div></div>
      </section>
    </main>
  </div>

  <footer class="taskbar">
    <button class="start" aria-label="Start"><svg width="40" height="40"><use href="#orb"/></svg></button>
    <span class="dots"></span>
    <div class="tasks">
      <button class="open stack" aria-label="Explorer"><svg><use href="#explorer"/></svg></button>
      <button aria-label="Internet Explorer"><svg><use href="#ie"/></svg></button>
      <button class="open" aria-label="Media Player"><svg><use href="#wmp"/></svg></button>
      <button aria-label="S4"><svg viewBox="0 0 32 32"><path d="M1.500 2h29v3L17 31h-2L1.500 5z" fill="#17285e" stroke="#a81c1c" stroke-width="2.500"/><text class="s4-big" x="9" y="19">S</text><text class="s4-small" x="21" y="11">4</text></svg></button>
      <button aria-label="Portrait"><svg><use href="#face"/></svg></button>
      <button class="open" aria-label="FL"><svg viewBox="0 0 32 32"><path d="M1 1h30v30H1z" fill="#f8f9fa" stroke="#ccc"/><text class="fl-text" x="8" y="21">FL</text></svg></button>
      <button class="open stack" aria-label="Firefox"><svg><use href="#ff"/></svg></button>
      <button class="open" aria-label="Spreadsheet"><svg viewBox="0 0 32 32"><path d="M8 1h22v30H8z" fill="#f8f8fa" stroke="#9aa"/><path d="M11 6h16v23H11zM11 10h16M11 14h16M11 18h16M11 22h16M11 26h16M16 6v23M21 6v23" fill="none" stroke="#9aa2aa" stroke-width="1"/><path d="M1 3h17v10H1z" fill="#1676c0"/><text class="odf-text" x="2" y="11">ODF</text></svg></button>
      <button class="open stack" aria-label="VLC"><svg><use href="#vlc"/></svg></button>
      <button class="open" aria-label="WordPad"><svg><use href="#writer"/></svg></button>
      <button class="open" aria-label="FileZilla"><svg><use href="#fz"/></svg></button>
      <button class="open stack" aria-label="Notepad"><svg><use href="#note"/></svg></button>
      <button class="open hot" aria-label="mIRC"><svg><use href="#mirc"/></svg></button>
      <button class="open" aria-label="uTorrent"><svg><use href="#utor"/></svg></button>
      <button class="open" aria-label="PDF reader"><svg><use href="#pdf"/></svg></button>
      <button class="open" aria-label="Photo viewer"><svg><use href="#photo"/></svg></button>
      <button class="open" aria-label="Task Manager"><svg><use href="#taskm"/></svg></button>
      <button class="open" aria-label="Installer"><svg><use href="#inst"/></svg></button>
    </div>
    <span class="dots"></span>
    <div class="tray">
      <span class="lang">FI</span>
      <svg class="kbd"><use href="#kbd"/></svg>
      <span class="chev"></span>
      <div class="cones">
        <svg><use href="#vlc"/></svg><svg><use href="#vlc"/></svg><svg><use href="#vlc"/></svg><svg><use href="#vlc"/></svg><svg><use href="#vlc"/></svg><svg><use href="#vlc"/></svg><svg><use href="#vlc"/></svg><svg><use href="#vlc"/></svg>
        <svg><use href="#vlc"/></svg><svg><use href="#vlc"/></svg><svg><use href="#vlc"/></svg><svg><use href="#vlc"/></svg><svg><use href="#vlc"/></svg><svg><use href="#vlc"/></svg><svg><use href="#vlc"/></svg><svg><use href="#vlc"/></svg>
        <svg><use href="#vlc"/></svg><svg><use href="#vlc"/></svg><svg><use href="#vlc"/></svg><svg><use href="#vlc"/></svg><svg><use href="#vlc"/></svg><svg><use href="#vlc"/></svg><svg><use href="#vlc"/></svg><svg><use href="#vlc"/></svg>
        <svg><use href="#utor"/></svg><svg><use href="#flag"/></svg><svg><use href="#net"/></svg>
      </div>
      <time class="clock" datetime="2011-11-11T03:24"><span>03:24</span><span>2011/11/11</span></time>
      <button class="show" aria-label="Show desktop"></button>
    </div>
  </footer>
</div>
</body>
</html>
```
FILE: styles.css
```css
* { box-sizing: border-box; }
body, h1, h2, p, ul { margin: 0; padding: 0; font-size: inherit; font-weight: inherit; }
ul { list-style: none; }
body { font: 12px/16px Roboto, "Open Sans", sans-serif; color: #000; background: #ababab; }
button { margin: 0; padding: 0; border: 0; background: none; font: inherit; color: inherit; }
svg { display: block; flex: none; }
.sprites { position: absolute; width: 0; height: 0; }
.i16 { width: 16px; height: 16px; }

.desktop { display: flex; flex-direction: column; height: 100vh; min-height: 840px; overflow: hidden; }

/* application caption */
.titlebar {
  display: flex; align-items: center; height: 22px; gap: 6px; flex: none;
  border-bottom: 1px solid #3d566e;
  box-shadow: inset 0 -1px #cfe6f4;
  background:
    radial-gradient(ellipse 60px 24px at 20px 10px, #e4f1fa, transparent),
    radial-gradient(ellipse 40px 22px at 120px 20px, #3a80b4, transparent),
    radial-gradient(ellipse 30px 22px at 275px 18px, #4a90c8, transparent),
    radial-gradient(ellipse 50px 20px at 340px 14px, #5a9ed4, transparent),
    radial-gradient(ellipse 26px 14px at 570px 18px, #b0daf4, transparent),
    radial-gradient(ellipse 26px 14px at 650px 20px, #a4c8e8, transparent),
    radial-gradient(ellipse 30px 14px at 722px 20px, #2f70a8, transparent),
    radial-gradient(ellipse 100px 26px at 800px 10px, #62a4d8, transparent),
    radial-gradient(ellipse 30px 14px at 950px 20px, #5c94c4, transparent),
    radial-gradient(ellipse 40px 16px at 1035px 16px, #98b0dc, transparent),
    radial-gradient(ellipse 90px 24px at 1180px 10px, #66a8e0, transparent),
    radial-gradient(ellipse 90px 20px at 1400px 6px, #6ca4dc, transparent),
    radial-gradient(ellipse 60px 18px at 1620px 4px, #64a2dc, transparent),
    linear-gradient(90deg, #a8d0ea, #84c0e8 10%, #84c4ec 60%, #88d0f4 85%, #b0e0f8);
}
.appbtns { display: flex; align-self: flex-start; margin-left: auto; margin-right: 3px; height: 18px; border: 1px solid #52677c; border-top: 0; border-radius: 0 0 5px 5px; overflow: hidden; }
.appbtns button { width: 27px; display: grid; place-items: center; background: linear-gradient(#c4dcec, #b0cfe2 45%, #8cb0c8 50%, #a8c8dc); border-right: 1px solid #52677c; }
.appbtns .close { width: 48px; border: 0; background: linear-gradient(#e0a090, #d06a54 45%, #b8301c 50%, #d8604a); }

.menubar { display: flex; flex: none; height: 19px; padding-left: 1px; background: linear-gradient(#fff, #e8ecf5 35%, #d5dcee 40%, #e0e6f8); border-bottom: 1px solid #b4bccc; }
.menubar button { padding: 2px 6px 0; margin-right: 2px; height: 18px; }
.menubar u { text-underline-offset: 1px; }

.toolbar { display: flex; align-items: center; flex: none; height: 28px; background: #f0f0f0; padding-left: 3px; }
.toolbar button { width: 24px; height: 24px; display: grid; place-items: center; }
.grip { width: 2px; height: 18px; margin-right: 6px; background: repeating-linear-gradient(#a8a8a8 0 2px, transparent 2px 4px); }
.sep { width: 5px; height: 16px; background: linear-gradient(90deg, transparent 2px, #a0a0a0 2px 3px, transparent 3px); }
.sep.wide { width: 10px; background: linear-gradient(90deg, transparent 5px, #a0a0a0 5px 6px, transparent 6px); }

.switchbar { display: flex; flex: none; align-items: center; gap: 3px; height: 29px; padding: 0 0 4px 3px; background: #f0f0f0; font: 11px/16px "Liberation Sans", sans-serif; }
.switchbar .grip { margin-right: 1px; }
.switchbar button { display: flex; align-items: center; gap: 3px; width: 120px; height: 24px; padding: 0 1px; border: 1px solid transparent; border-radius: 3px; }
.switchbar button.on { padding: 1px 2px 0; border-color: #555; background: linear-gradient(#c8c8c8, #dedede 30%, #e8e8e8); }
.alert { color: #f00; }

.work { display: flex; flex: 1; min-height: 0; background: #f0f0f0; }
.side { width: 164px; margin-right: 4px; flex: none; display: flex; flex-direction: column; }
.hgrip { height: 2px; margin: 3px 3px 3px; background: repeating-linear-gradient(90deg, #a8a8a8 0 2px, transparent 2px 4px); }
.tree { flex: 1; padding: 1px 0 0 7px; background: #fff; border-top: 1px solid #8e8f8f; border-left: 1px solid #8e8f8f; }
.row { display: flex; align-items: center; height: 18px; }
.row span { margin-left: 3px; padding: 0 2px; height: 18px; line-height: 18px; white-space: nowrap; }
.row .sel { background: #39f; color: #fff; padding: 0 4px 0 2px; }
.box { width: 9px; height: 9px; border: 1px solid #919191; border-radius: 1px; background: linear-gradient(#333, #333) center / 5px 1px no-repeat #fff; }
.dash { height: 1px; width: 4px; background: repeating-linear-gradient(90deg, #888 0 1px, transparent 1px 2px); }
.row > .i16 { margin-left: 1px; }
.lv2 { margin-left: 19px; }
.lv2 > li:first-child, .lv3 { background: repeating-linear-gradient(#888 0 1px, transparent 1px 2px) 4px 0 / 1px 100% no-repeat; }
.lv3 { margin-left: 19px; }
.lv3 .row { padding-left: 4px; }
.lv3 .row:last-child { background: linear-gradient(#fff, #fff) 4px 9px / 1px 9px no-repeat; }
.lv3 .dash { width: 9px; }

/* window area */
.mdi { position: relative; flex: 1; background: #ababab; border-top: 1px solid #808080; overflow: hidden; }
.win { position: absolute; display: flex; flex-direction: column; border: 1px solid #4a4a4a; border-radius: 6px 6px 0 0; background: #d7e4f2; padding: 0 7px 7px; box-shadow: inset 0 0 0 1px #e8f0f8; }
.w-status { left: 1px; top: 0; width: 875px; height: 470px; }
.w-cb { left: 29px; top: 28px; width: 1078px; height: 652px; }
.w-putkis { left: 57px; top: 56px; width: 1078px; height: 652px; }
.w-nuvi { left: 197px; top: 196px; width: 875px; height: 470px; }
.cap { display: flex; align-items: center; gap: 5px; height: 29px; margin: 0 -7px; padding: 5px 9px 0; flex: none; border-radius: 5px 5px 0 0; background: linear-gradient(#bfcddb, #d7e4f2); color: #474d55; }
.cap h2 { white-space: nowrap; overflow: hidden; flex: 1; min-width: 0; padding-top: 1px; }
.btns { display: flex; gap: 2px; margin-left: auto; }
.btns button { width: 31px; height: 17px; display: grid; place-items: center; border: 1px solid #8493ad; border-radius: 2px; background: #c8d6e6; box-shadow: inset 0 0 0 1px #dce7f3; }
.active { border-color: #000; background: #b9d1ea; box-shadow: inset -1px -1px #38c8e8; }
.active .cap { background: linear-gradient(#99b4d1, #b9d1ea); color: #000; margin-right: -6px; padding-right: 8px; }
.active .btns button { background: linear-gradient(#c4d6ea 50%, #9fb8d4 50%, #b8d0e8); border-color: #5a6e8c; }
.active .btns .close { background: linear-gradient(#e0a498, #d48070 50%, #b83a24 50%, #d4705c); border-color: #5c1c1c; box-shadow: inset 0 0 0 1px #e4a89c; }
.body { flex: 1; display: flex; flex-direction: column; min-height: 0; background: #fff; border: 1px solid #8c9098; border-right-color: #fff; border-bottom-color: #fff; font: bold 13px/16px "DejaVu Sans Mono", monospace; }
.pane { flex: 1; display: flex; min-height: 0; }
.log { flex: 1; min-width: 0; display: flex; flex-direction: column; justify-content: flex-end; overflow: hidden; padding: 0 0 1px 2px; }
.log p { min-height: 16px; flex: none; padding-left: 16px; text-indent: -16px; white-space: nowrap; }
.log hr { width: 100%; height: 1px; margin: 8px 0 7px; border: 0; background: #ccc; flex: none; }
.green { color: #009300; }
.navy { color: #00007f; }
.maroon { color: #7f0000; }
.purple { color: #9c009c; }
.edit { display: flex; flex: none; height: 21px; border-top: 2px solid #c0c0c0; padding: 2px 0 2px 2px; }
.caret { width: 1px; height: 15px; background: #000; }
.edit input { flex: 1; min-width: 0; border: 0; padding: 0; outline: 0; background: none; font: inherit; }
.scroll { width: 17px; display: flex; flex-direction: column; align-items: center; background: linear-gradient(90deg, #e4e4e4, #f0f0f0 30%, #f2f2f2); }
.up, .down { border: 4px solid transparent; width: 0; height: 0; }
.up { border-bottom-color: #444; border-top: 0; margin-top: 7px; }
.down { border-top-color: #444; border-bottom: 0; margin: 8px 0 7px; }
.thumb { width: 15px; height: 172px; margin-top: auto; border: 1px solid #8c8c8c; border-radius: 2px; background: repeating-linear-gradient(#555 0 1px, transparent 1px 3px) center / 7px 8px no-repeat, linear-gradient(90deg, #f4f4f4, #e2e2e4 45%, #c4c4c8 55%, #d0d0d4); }
.nicks { width: 94px; border-left: 2px solid #c0c0c0; padding-left: 2px; overflow: hidden; }
.nicks li { height: 16px; white-space: nowrap; }
.nicks .tail { padding-left: 64px; }

/* taskbar */
.taskbar { display: flex; align-items: center; height: 41px; flex: none; color: #fff; border-top: 1px solid #e8eef4; box-shadow: inset 0 1px #101820, inset 0 2px #5c7080;
  background: radial-gradient(ellipse 120px 50px at 1640px 30px, #24405c, transparent), linear-gradient(90deg, #0a1018, #1a2c44 5%, #24405f 20%, #28486a 35%, #203048 45%, #15191f 56%, #141c26 70%, #14222f 88%, #0c1016 95%); }
.start { width: 40px; height: 40px; margin-left: 7px; }
.dots { width: 9px; height: 30px; margin: 0 10px; background: radial-gradient(circle at 1px 1px, #7c8a98 1px, transparent 1px) 0 0 / 3px 4px; flex: none; }
.tasks { display: flex; gap: 4px; }
.tasks button { width: 52px; height: 38px; display: grid; place-items: center; border-radius: 3px; }
.tasks svg { width: 32px; height: 32px; }
.tasks .open { border: 1px solid #8694a4; box-shadow: inset 0 0 0 1px #ffffff30, 0 0 0 1px #00000080; background: linear-gradient(160deg, #ffffff88, #ffffff38 45%, #ffffff18 55%, #ffffff28); }
.tasks .stack { border-right: 8px double #5e7088; }
.tasks .hot { background: linear-gradient(160deg, #fff0e8, #f0a490 50%, #d8705c 60%, #f4b8a8); border-color: #f8d8cc; }
.s4-big { font: bold 19px "Liberation Sans", sans-serif; fill: #f0e83c; }
.s4-small { font: bold 9px "Liberation Sans", sans-serif; fill: #f0e83c; }
.fl-text { font: bold 14px "Open Sans", sans-serif; fill: #0858c0; }
.odf-text { font: bold 7px "Liberation Sans", sans-serif; fill: #fff; }
.tray { display: flex; align-items: center; flex: 1; height: 100%; }
.lang { margin-left: 2px; width: 20px; margin-top: -4px; }
.kbd { width: 16px; height: 22px; margin-top: -4px; }
.chev { border: 4px solid transparent; border-bottom: 5px solid #fff; border-top: 0; margin: 0 11px; }
.cones { display: flex; flex: 1; justify-content: space-between; max-width: 642px; margin-top: 2px; }
.cones svg { width: 16px; height: 18px; }
.clock { display: flex; flex-direction: column; align-items: center; line-height: 17px; width: 88px; margin-left: auto; }
.show { width: 13px; height: 38px; border: 1px solid #5c646c; background: linear-gradient(135deg, #7a828a, #20262c 50%); }
```
